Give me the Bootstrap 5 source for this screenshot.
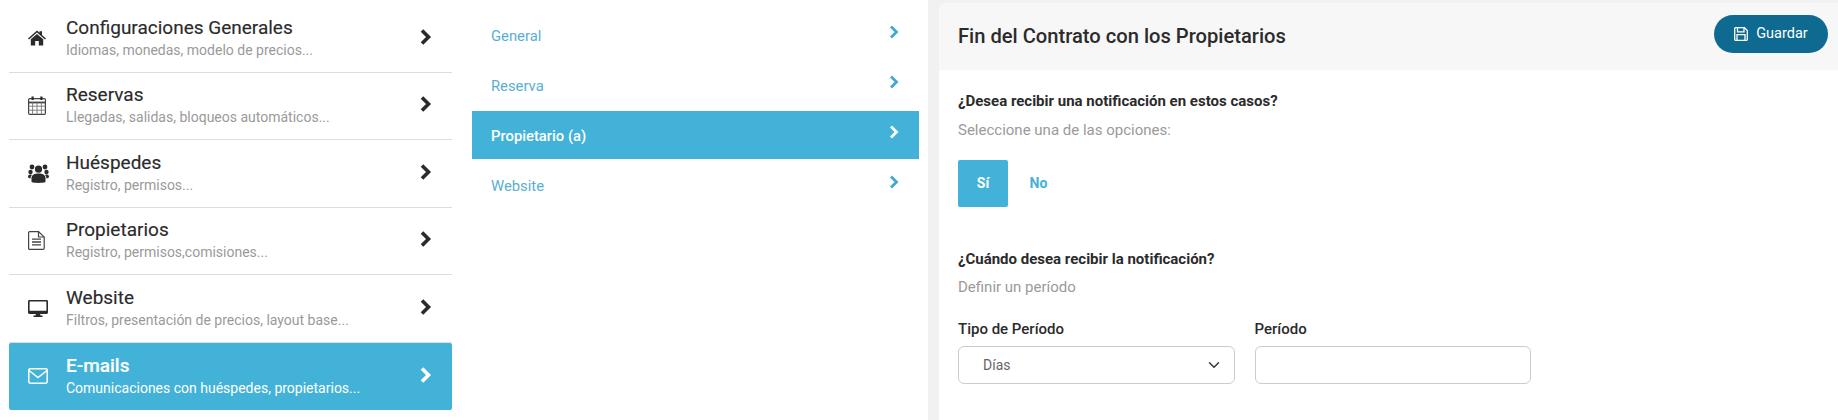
<!DOCTYPE html>
<html lang="es">
<head>
<meta charset="utf-8">
<title>Configuraciones</title>
<link rel="stylesheet" href="https://cdn.jsdelivr.net/npm/bootstrap@5.3.0/dist/css/bootstrap.min.css">
<style>
html,body{height:420px;overflow:hidden;background:#fff}
body{font-family:Roboto,"Liberation Sans",sans-serif;color:#2b2b2b;font-size:14px}
.shell{height:420px}
.pane-a{width:461px;padding:5px 9px 0 9px;flex:none}
.pane-b{width:467px;padding:10px 9px 0 11px;flex:none}
.pane-c{flex:1 1 auto;min-width:0;background:#f1f1f1;padding:3px 0 0 11px}
.mrow{height:67.5px;padding:0 20px 0 19px;border-bottom:1px solid #ddd;color:#2b2b2b;text-decoration:none}
.mrow:last-child{border-bottom:0}
.mrow.on{background:#43b2d8;color:#fff;border-radius:2px;border-bottom:0;height:67px}
.mrow.on .msub{color:#fff}
.micon{width:38px;flex:none;display:flex}
.mtitle{font-size:19px;font-weight:400;line-height:24px;margin-top:-1px;-webkit-text-stroke:.15px currentColor}
.msub{font-size:14px;line-height:20px;color:#9a9a9a}
.mrow.on .mtitle{font-weight:500}
.chev{flex:none;display:block;margin-top:-3px}
.srow{height:50px;padding:0 20px 0 19px;color:#5aaed2;font-size:14.8px;text-decoration:none;padding-top:2px}
.srow svg{margin-top:-9px}
.srow.on{background:#43b2d8;color:#fff;font-weight:500;height:48px;margin-top:1px;margin-bottom:1px}
.sheet{background:#fff;height:100%;border-top-left-radius:8px;overflow:hidden}
.sheet-head{height:67px;background:#f7f7f7;padding:0 10px 0 19px}
.sheet-title{font-size:20.15px;font-weight:500;margin:0;color:#2b2b2b}
.save-btn{background:#0e6a90;color:#fff;border:0;border-radius:19px;width:114px;height:38px;font-size:14.5px;padding:0 0 0 0;margin-bottom:6px}
.save-btn:hover{background:#0e6a90;color:#fff}
.sheet-body{padding:21px 19px 0}
.qlabel{font-weight:700;font-size:15px;line-height:20px;margin:0;color:#2b2b2b}
.qhint{font-size:15px;line-height:20px;color:#9a9a9a;margin:9px 0 0}
.q2 + .qhint{margin-top:8px}
.tog{margin-top:20px;height:47px}
.tog-on{width:50px;height:47px;background:#43b2d8;color:#fff;font-weight:700;border:0;border-radius:2px;padding:0;font-size:14px}
.tog-off{width:61px;height:47px;background:transparent;color:#43b2d8;font-weight:700;border:0;padding:0;font-size:14px}
.q2 {margin-top:42px}
.fields{margin-top:22px;gap:20px}
.fcol{width:276.5px}
.flabel{font-weight:500;font-size:15px;line-height:20px;margin:0 0 7px;color:#2b2b2b}
.fctl{height:38px;border:1px solid #ccc;border-radius:6px;font-size:14px;color:#666;padding:0 24px;box-shadow:none}
.fctl.form-control{padding:0 12px}
</style>
</head>
<body>
<div class="shell d-flex">
  <div class="pane-a">
    <a class="mrow d-flex align-items-center" href="#">
      <span class="micon"><svg width="18" height="16" viewBox="0 0 18 16" fill="#2b2b2b"><path d="M9 0.5 L11.5 2.7V1.2H14V4.9L18 8.4 17 9.4 9 2.6 1 9.4 0 8.4Z"/><path d="M9 4 15.2 9.2V15.5H10.8V11H7.2V15.5H2.8V9.2Z"/></svg></span>
      <span class="flex-grow-1"><span class="mtitle d-block">Configuraciones Generales</span><span class="msub d-block">Idiomas, monedas, modelo de precios...</span></span>
      <svg class="chev" width="12" height="18" viewBox="0 0 12 18"><path d="M2 2.500 8.500 9 2 15.500" fill="none" stroke="#2b2b2b" stroke-width="3.6"/></svg>
    </a>
    <a class="mrow d-flex align-items-center" href="#">
      <span class="micon"><svg width="18" height="19" viewBox="0 0 18 19" fill="none" stroke="#444"><rect x=".6" y="2.6" width="16.8" height="15.8" rx="1.2" stroke-width="1.2"/><path d="M.6 6.5H17.4" stroke-width="1.8"/><path d="M.6 10.2H17.4M.6 14.2H17.4M4.6 6.5V18.4M9 6.5V18.4M13.4 6.5V18.4" stroke-width=".9" stroke="#777"/><path d="M4.6 .5V4M13.4 .5V4" stroke-width="2.2" stroke="#2b2b2b"/></svg></span>
      <span class="flex-grow-1"><span class="mtitle d-block">Reservas</span><span class="msub d-block">Llegadas, salidas, bloqueos automáticos...</span></span>
      <svg class="chev" width="12" height="18" viewBox="0 0 12 18"><path d="M2 2.500 8.500 9 2 15.500" fill="none" stroke="#2b2b2b" stroke-width="3.6"/></svg>
    </a>
    <a class="mrow d-flex align-items-center" href="#">
      <span class="micon"><svg width="21" height="19" viewBox="0 0 21 19" fill="#2b2b2b"><circle cx="10.5" cy="5.2" r="3.6"/><circle cx="4" cy="3" r="2.4"/><circle cx="17" cy="3" r="2.4"/><circle cx="2.5" cy="8" r="2.2"/><circle cx="18.5" cy="8" r="2.2"/><path d="M3.5 18V14.2C3.5 11 6.5 9.6 10.5 9.6S17.5 11 17.5 14.2V18C14 19.2 7 19.2 3.5 18Z"/><path d="M0 12.5C0 11 1.5 10.6 3 10.6L4 11C3 12 2.6 13 2.5 14.6 1 14.4 0 13.8 0 12.5ZM21 12.5C21 11 19.5 10.6 18 10.6L17 11C18 12 18.4 13 18.5 14.6 20 14.4 21 13.8 21 12.5Z"/></svg></span>
      <span class="flex-grow-1"><span class="mtitle d-block">Huéspedes</span><span class="msub d-block">Registro, permisos...</span></span>
      <svg class="chev" width="12" height="18" viewBox="0 0 12 18"><path d="M2 2.500 8.500 9 2 15.500" fill="none" stroke="#2b2b2b" stroke-width="3.6"/></svg>
    </a>
    <a class="mrow d-flex align-items-center" href="#">
      <span class="micon"><svg width="17" height="19" viewBox="0 0 17 19" fill="none" stroke="#444" stroke-width="1.2"><path d="M1.6.6H10.5L16.2 6V17.2C16.2 17.9 15.8 18.4 15 18.4H1.6C1 18.4.6 18 .6 17.2V1.6C.6 1 1 .6 1.6.6Z"/><path d="M10.5.6V6H16.2"/><path d="M4 8.2H13M4 11H13M4 13.8H13" stroke-width="1.3"/></svg></span>
      <span class="flex-grow-1"><span class="mtitle d-block">Propietarios</span><span class="msub d-block">Registro, permisos,comisiones...</span></span>
      <svg class="chev" width="12" height="18" viewBox="0 0 12 18"><path d="M2 2.500 8.500 9 2 15.500" fill="none" stroke="#2b2b2b" stroke-width="3.6"/></svg>
    </a>
    <a class="mrow d-flex align-items-center" href="#">
      <span class="micon"><svg width="20" height="17" viewBox="0 0 20 17" fill="#2b2b2b"><path d="M1.4 0H18.6C19.4 0 20 .6 20 1.4V12.6C20 13.4 19.4 14 18.6 14H1.4C.6 14 0 13.4 0 12.6V1.4C0 .6.6 0 1.4 0ZM1.6 1.6V10.8H18.4V1.6Z" fill-rule="evenodd"/><path d="M8 14H12L12.6 15.6H14.5V17H5.5V15.6H7.4Z"/></svg></span>
      <span class="flex-grow-1"><span class="mtitle d-block">Website</span><span class="msub d-block">Filtros, presentación de precios, layout base...</span></span>
      <svg class="chev" width="12" height="18" viewBox="0 0 12 18"><path d="M2 2.500 8.500 9 2 15.500" fill="none" stroke="#2b2b2b" stroke-width="3.6"/></svg>
    </a>
    <a class="mrow on d-flex align-items-center" href="#">
      <span class="micon"><svg width="20" height="16" viewBox="0 0 20 16" fill="none" stroke="#fff" stroke-width="1.5"><rect x=".8" y=".8" width="18.4" height="14.4" rx="1.4"/><path d="M1 2.5 10 9.5 19 2.5"/></svg></span>
      <span class="flex-grow-1"><span class="mtitle d-block">E-mails</span><span class="msub d-block">Comunicaciones con huéspedes, propietarios...</span></span>
      <svg class="chev" width="12" height="18" viewBox="0 0 12 18"><path d="M2 2.500 8.500 9 2 15.500" fill="none" stroke="#fff" stroke-width="3.6"/></svg>
    </a>
  </div>
  <div class="pane-b">
    <a class="srow d-flex align-items-center justify-content-between" href="#">General<svg width="10" height="14" viewBox="0 0 10 14"><path d="M2 1.5 7.5 7 2 12.500" fill="none" stroke="#43a9d0" stroke-width="2.800"/></svg></a>
    <a class="srow d-flex align-items-center justify-content-between" href="#">Reserva<svg width="10" height="14" viewBox="0 0 10 14"><path d="M2 1.5 7.5 7 2 12.500" fill="none" stroke="#43a9d0" stroke-width="2.800"/></svg></a>
    <a class="srow on d-flex align-items-center justify-content-between" href="#">Propietario (a)<svg width="10" height="14" viewBox="0 0 10 14"><path d="M2 1.5 7.5 7 2 12.500" fill="none" stroke="#fff" stroke-width="2.800"/></svg></a>
    <a class="srow d-flex align-items-center justify-content-between" href="#">Website<svg width="10" height="14" viewBox="0 0 10 14"><path d="M2 1.5 7.5 7 2 12.500" fill="none" stroke="#43a9d0" stroke-width="2.800"/></svg></a>
  </div>
  <div class="pane-c">
    <div class="sheet">
      <div class="sheet-head d-flex align-items-center justify-content-between">
        <h1 class="sheet-title">Fin del Contrato con los Propietarios</h1>
        <button type="button" class="btn save-btn d-flex align-items-center justify-content-center gap-2"><svg width="14" height="14" viewBox="0 0 14 14" fill="none" stroke="#fff" stroke-width="1.3"><path d="M1.500.7H10.500L13.300 3.500V12.500C13.300 13 13 13.300 12.500 13.300H1.500C1 13.300.7 13 .7 12.500V1.500C.7 1 1 .7 1.500.7Z"/><path d="M3.500.7V4.800H10V.7M3 13.300V7.700H11V13.300"/></svg>Guardar</button>
      </div>
      <div class="sheet-body">
        <p class="qlabel">¿Desea recibir una notificación en estos casos?</p>
        <p class="qhint">Seleccione una de las opciones:</p>
        <div class="tog d-flex">
          <button type="button" class="btn tog-on">Sí</button>
          <button type="button" class="btn tog-off">No</button>
        </div>
        <p class="qlabel q2">¿Cuándo desea recibir la notificación?</p>
        <p class="qhint">Definir un período</p>
        <div class="fields d-flex">
          <div class="fcol">
            <label class="flabel d-block" for="tp">Tipo de Período</label>
            <select id="tp" class="form-select fctl"><option>Días</option></select>
          </div>
          <div class="fcol">
            <label class="flabel d-block" for="pr">Período</label>
            <input id="pr" type="text" class="form-control fctl">
          </div>
        </div>
      </div>
    </div>
  </div>
</div>
</body>
</html>
